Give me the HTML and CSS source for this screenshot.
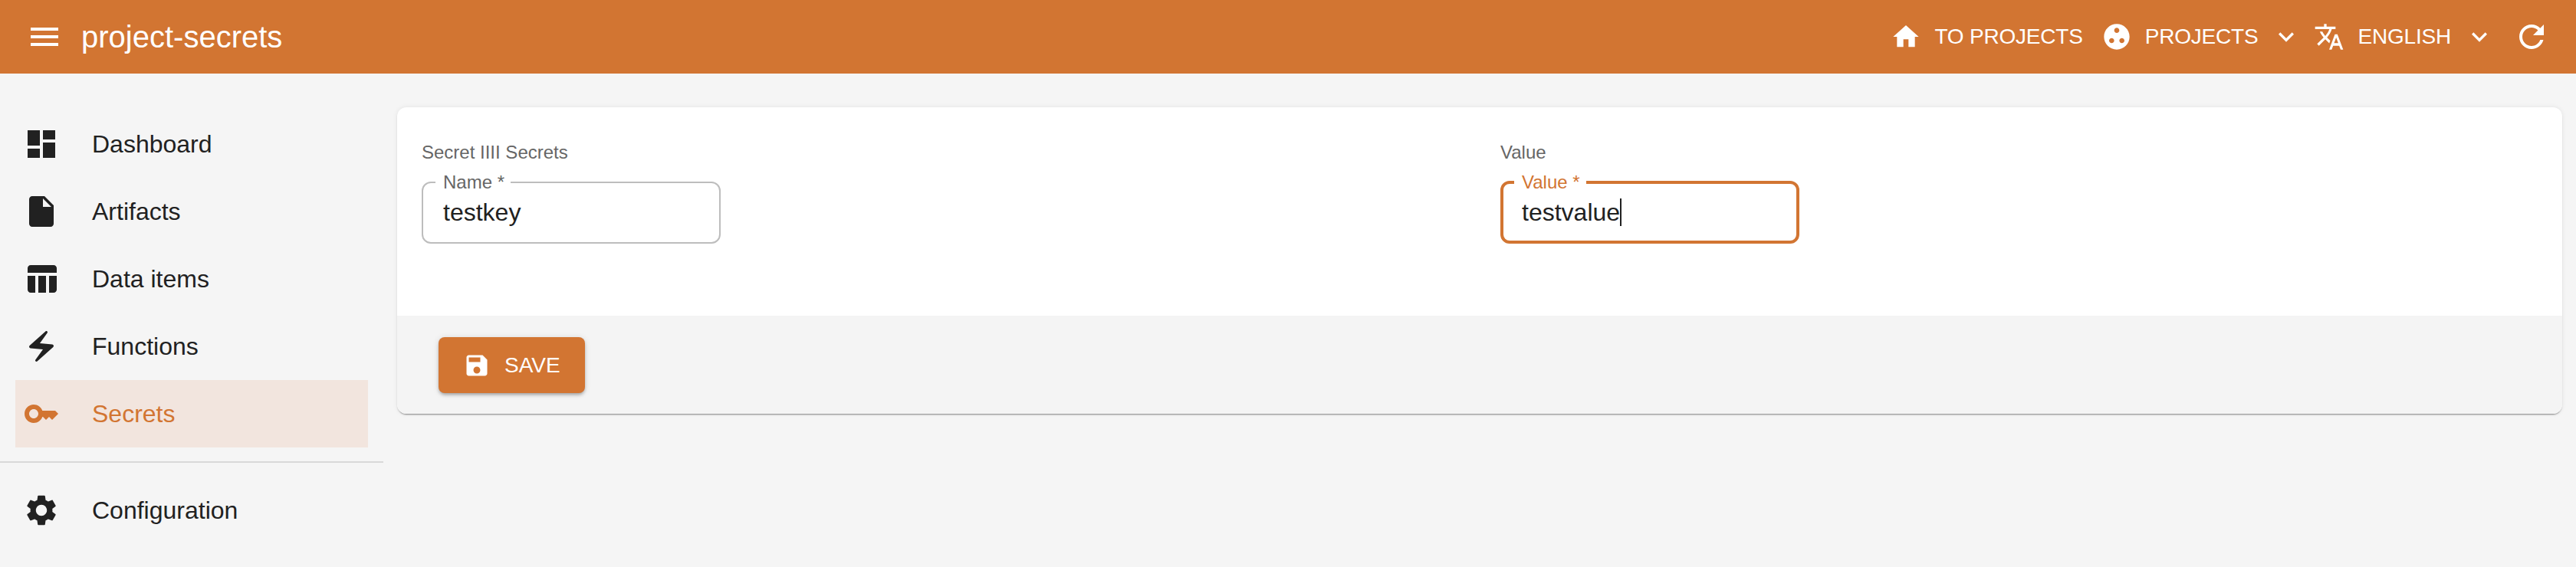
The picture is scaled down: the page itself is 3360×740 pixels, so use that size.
FILE: index.html
```html
<!DOCTYPE html>
<html lang="en">
<head>
    <meta charset="UTF-8">
    <meta name="viewport" content="width=device-width, initial-scale=1.0">
    <title>project-secrets</title>
    <link rel="stylesheet" href="styles.css">
</head>
<body>
    <header class="topbar">
        <svg class="menu-icon" viewBox="0 0 24 24"><path d="M3 18h18v-2H3v2zm0-5h18v-2H3v2zm0-7v2h18V6H3z"/></svg>
        <h1 class="app-title">project-secrets</h1>
        <div class="top-actions">
            <a class="top-link top-home">
                <svg viewBox="0 0 24 24"><path d="M10 20v-6h4v6h5v-8h3L12 3 2 12h3v8z"/></svg>
                <span>TO PROJECTS</span>
            </a>
            <a class="top-link top-projects">
                <svg viewBox="0 0 24 24"><path d="M12 2C6.48 2 2 6.48 2 12s4.48 10 10 10 10-4.480 10-10S17.520 2 12 2zM8 17c-1.100 0-2-.9-2-2s.9-2 2-2 2 .9 2 2-.9 2-2 2zm4-8c-1.100 0-2-.9-2-2s.9-2 2-2 2 .9 2 2-.9 2-2 2zm4 8c-1.100 0-2-.9-2-2s.9-2 2-2 2 .9 2 2-.9 2-2 2z"/></svg>
                <span>PROJECTS</span>
                <svg class="chevron" viewBox="0 0 24 24"><path d="M7.410 8.590 12 13.170l4.590-4.580L18 10l-6 6-6-6z"/></svg>
            </a>
            <a class="top-link top-lang">
                <svg viewBox="0 0 24 24"><path d="m12.870 15.070-2.540-2.510.03-.03c1.740-1.940 2.980-4.170 3.710-6.530H17V4h-7V2H8v2H1v1.990h11.170C11.500 7.920 10.440 9.750 9 11.350 8.070 10.320 7.300 9.190 6.690 8h-2c.73 1.630 1.730 3.170 2.980 4.560l-5.090 5.020L4 19l5-5 3.110 3.110.76-2.040zM18.500 10h-2L12 22h2l1.120-3h4.750L21 22h2l-4.500-12zm-2.620 7 1.620-4.330L19.120 17h-3.240z"/></svg>
                <span>ENGLISH</span>
                <svg class="chevron" viewBox="0 0 24 24"><path d="M7.410 8.590 12 13.170l4.590-4.580L18 10l-6 6-6-6z"/></svg>
            </a>
            <svg class="refresh-icon" viewBox="0 0 24 24"><path d="M17.650 6.350C16.200 4.900 14.210 4 12 4c-4.420 0-7.990 3.580-7.990 8s3.570 8 7.990 8c3.730 0 6.840-2.550 7.730-6h-2.080c-.82 2.330-3.040 4-5.650 4-3.310 0-6-2.690-6-6s2.690-6 6-6c1.660 0 3.140.69 4.220 1.780L13 11h7V4l-2.350 2.350z"/></svg>
        </div>
    </header>

    <div class="layout">
        <nav class="sidebar">
            <ul class="nav-list">
                <li class="nav-item">
                    <svg viewBox="0 0 24 24"><path d="M3 13h8V3H3v10zm0 8h8v-6H3v6zm10 0h8V11h-8v10zm0-18v6h8V3h-8z"/></svg>
                    <span>Dashboard</span>
                </li>
                <li class="nav-item">
                    <svg viewBox="0 0 24 24"><path d="M6 2c-1.100 0-1.990.9-1.990 2L4 20c0 1.100.89 2 1.990 2H18c1.100 0 2-.9 2-2V8l-6-6H6zm7 7V3.500L18.500 9H13z"/></svg>
                    <span>Artifacts</span>
                </li>
                <li class="nav-item">
                    <svg viewBox="0 0 24 24"><path d="M10 10.020h5V21h-5zM17 21h3c1.100 0 2-.9 2-2v-9h-5v11zm3-18H5c-1.100 0-2 .9-2 2v3h19V5c0-1.100-.9-2-2-2zM3 19c0 1.100.9 2 2 2h3V10H3v9z"/></svg>
                    <span>Data items</span>
                </li>
                <li class="nav-item">
                    <svg viewBox="0 0 24 24"><path d="M14.690 2.210 4.330 11.490c-.64.580-.28 1.650.58 1.730L13 14l-4.850 6.760c-.22.310-.19.740.08 1.010.3.300.77.310 1.080.02l10.360-9.280c.64-.58.280-1.650-.58-1.730L11 10l4.850-6.760c.22-.31.190-.74-.08-1.010-.3-.3-.77-.31-1.080-.02z"/></svg>
                    <span>Functions</span>
                </li>
                <li class="nav-item nav-item-active">
                    <svg viewBox="0 0 24 24"><path d="M21 10h-8.350C11.830 7.670 9.610 6 7 6c-3.310 0-6 2.690-6 6s2.690 6 6 6c2.610 0 4.830-1.670 5.650-4H13l2 2 2-2 2 2 4-4.040L21 10zM7 15c-1.650 0-3-1.350-3-3s1.350-3 3-3 3 1.350 3 3-1.350 3-3 3z"/></svg>
                    <span>Secrets</span>
                </li>
            </ul>
            <ul class="nav-list nav-list-bottom">
                <li class="nav-item">
                    <svg viewBox="0 0 24 24"><path d="M19.140 12.940c.04-.3.060-.61.060-.94 0-.32-.02-.64-.07-.94l2.030-1.580c.18-.14.230-.41.120-.61l-1.920-3.320c-.12-.22-.37-.29-.59-.22l-2.390.96c-.5-.38-1.030-.7-1.620-.94l-.36-2.540c-.04-.24-.24-.41-.48-.41h-3.840c-.24 0-.43.170-.47.410l-.36 2.540c-.59.240-1.130.57-1.620.94l-2.390-.96c-.22-.08-.47 0-.59.220L2.740 8.870c-.12.210-.08.470.12.610l2.030 1.580c-.05.3-.09.630-.09.940s.02.640.07.940l-2.030 1.580c-.18.140-.23.410-.12.610l1.920 3.320c.12.220.37.290.59.220l2.390-.96c.5.380 1.030.7 1.620.94l.36 2.540c.05.240.24.410.48.410h3.840c.24 0 .44-.17.470-.41l.36-2.540c.59-.24 1.130-.56 1.620-.94l2.390.96c.22.080.47 0 .59-.22l1.920-3.320c.12-.22.070-.47-.12-.61l-2.010-1.580zM12 15.600c-1.980 0-3.600-1.620-3.600-3.600s1.620-3.600 3.600-3.600 3.600 1.620 3.600 3.600-1.620 3.600-3.600 3.600z"/></svg>
                    <span>Configuration</span>
                </li>
            </ul>
        </nav>

        <main class="content">
            <section class="card">
                <div class="card-body">
                    <div class="field-col">
                        <div class="field-title">Secret IIII Secrets</div>
                        <div class="text-field">
                            <fieldset class="outline"><legend>Name&nbsp;*</legend></fieldset>
                            <div class="field-value">testkey</div>
                        </div>
                    </div>
                    <div class="field-col">
                        <div class="field-title">Value</div>
                        <div class="text-field text-field-focused">
                            <fieldset class="outline"><legend>Value&nbsp;*</legend></fieldset>
                            <div class="field-value">testvalue<span class="caret"></span></div>
                        </div>
                    </div>
                </div>
                <div class="card-actions">
                    <button class="save-button">
                        <svg viewBox="0 0 24 24"><path d="M17 3H5c-1.110 0-2 .9-2 2v14c0 1.100.89 2 2 2h14c1.100 0 2-.9 2-2V7l-4-4zm-5 16c-1.660 0-3-1.340-3-3s1.340-3 3-3 3 1.340 3 3-1.340 3-3 3zm3-10H5V5h10v4z"/></svg>
                        SAVE
                    </button>
                </div>
            </section>
        </main>
    </div>
</body>
</html>
```

FILE: styles.css
```css
* {
    box-sizing: border-box;
}
body {
    margin: 0;
    height: 740px;
    overflow: hidden;
    background-color: #f5f5f5;
    font-family: 'Liberation Sans', Arial, sans-serif;
    color: #212121;
}
.topbar {
    height: 96px;
    background-color: #d27532;
    color: white;
    display: flex;
    align-items: center;
    padding: 0 34px;
}
.menu-icon {
    width: 48px;
    height: 48px;
    fill: white;
}
.app-title {
    margin: 0 0 0 24px;
    font-size: 40px;
    font-weight: 400;
}
.top-actions {
    margin-left: auto;
    display: flex;
    align-items: center;
}
.top-link {
    display: flex;
    align-items: center;
    font-size: 28px;
    letter-spacing: -0.2px;
}
.top-link svg {
    width: 40px;
    height: 40px;
    fill: white;
}
.top-link span {
    margin-left: 17px;
}
.top-link .chevron {
    margin-left: 17px;
}
.top-projects {
    margin-left: 24px;
}
.top-lang {
    margin-left: 16px;
}
.refresh-icon {
    width: 48px;
    height: 48px;
    fill: white;
    margin-left: 24px;
}
.layout {
    display: flex;
}
.sidebar {
    width: 500px;
    flex-shrink: 0;
    padding-top: 48px;
}
.nav-list {
    list-style: none;
    margin: 0;
    padding: 0 20px;
}
.nav-list-bottom {
    border-top: 2px solid #d9d9d9;
    margin-top: 18px;
    padding-top: 18px;
}
.nav-item {
    height: 88px;
    display: flex;
    align-items: center;
    padding-left: 10px;
    font-size: 32px;
    width: 460px;
}
.nav-item svg {
    width: 48px;
    height: 48px;
    fill: #212121;
    flex-shrink: 0;
}
.nav-item span {
    margin-left: 42px;
}
.nav-item-active {
    background-color: #f2e5de;
    color: #d27532;
}
.nav-item-active svg {
    fill: #d27532;
}
.content {
    flex: 1;
    padding: 44px 18px 0 18px;
}
.card {
    background-color: white;
    border-radius: 12px;
    overflow: hidden;
    box-shadow: 0 2px 2px -1px rgba(0,0,0,0.45), 0 0 6px rgba(0,0,0,0.08);
}
.card-body {
    height: 272px;
    display: grid;
    grid-template-columns: 1407px 1fr;
    padding: 45px 32px 0 32px;
}
.field-title {
    font-size: 24px;
    line-height: 28px;
    color: #666;
    margin-bottom: 25px;
}
.text-field {
    position: relative;
    width: 390px;
    height: 80px;
}
.outline {
    position: absolute;
    top: -11px;
    left: 0;
    right: 0;
    bottom: 0;
    margin: 0;
    padding: 0 16px;
    border: 2px solid #bdbdbd;
    border-radius: 12px;
}
.outline legend {
    padding: 0 8px 0 10px;
    font-size: 24px;
    line-height: 22px;
    color: #666;
}
.field-value {
    position: relative;
    padding: 21px 28px 0 28px;
    font-size: 32px;
    line-height: 37px;
}
.caret {
    display: inline-block;
    width: 2px;
    height: 36px;
    background-color: #212121;
    vertical-align: top;
}
.text-field-focused .outline {
    border: 4px solid #d27532;
    padding: 0 14px;
}
.text-field-focused legend {
    color: #d27532;
}
.card-actions {
    background-color: #f4f4f4;
    padding: 28px 54px;
    height: 128px;
}
.save-button {
    display: flex;
    align-items: center;
    height: 73px;
    padding: 0 32px;
    border: none;
    border-radius: 8px;
    background-color: #d27532;
    color: white;
    font-family: inherit;
    font-size: 28px;
    box-shadow: 0 3px 4px -1px rgba(0,0,0,0.3), 0 1px 8px rgba(0,0,0,0.12);
}
.save-button svg {
    width: 36px;
    height: 36px;
    fill: white;
    margin-right: 18px;
}
```
